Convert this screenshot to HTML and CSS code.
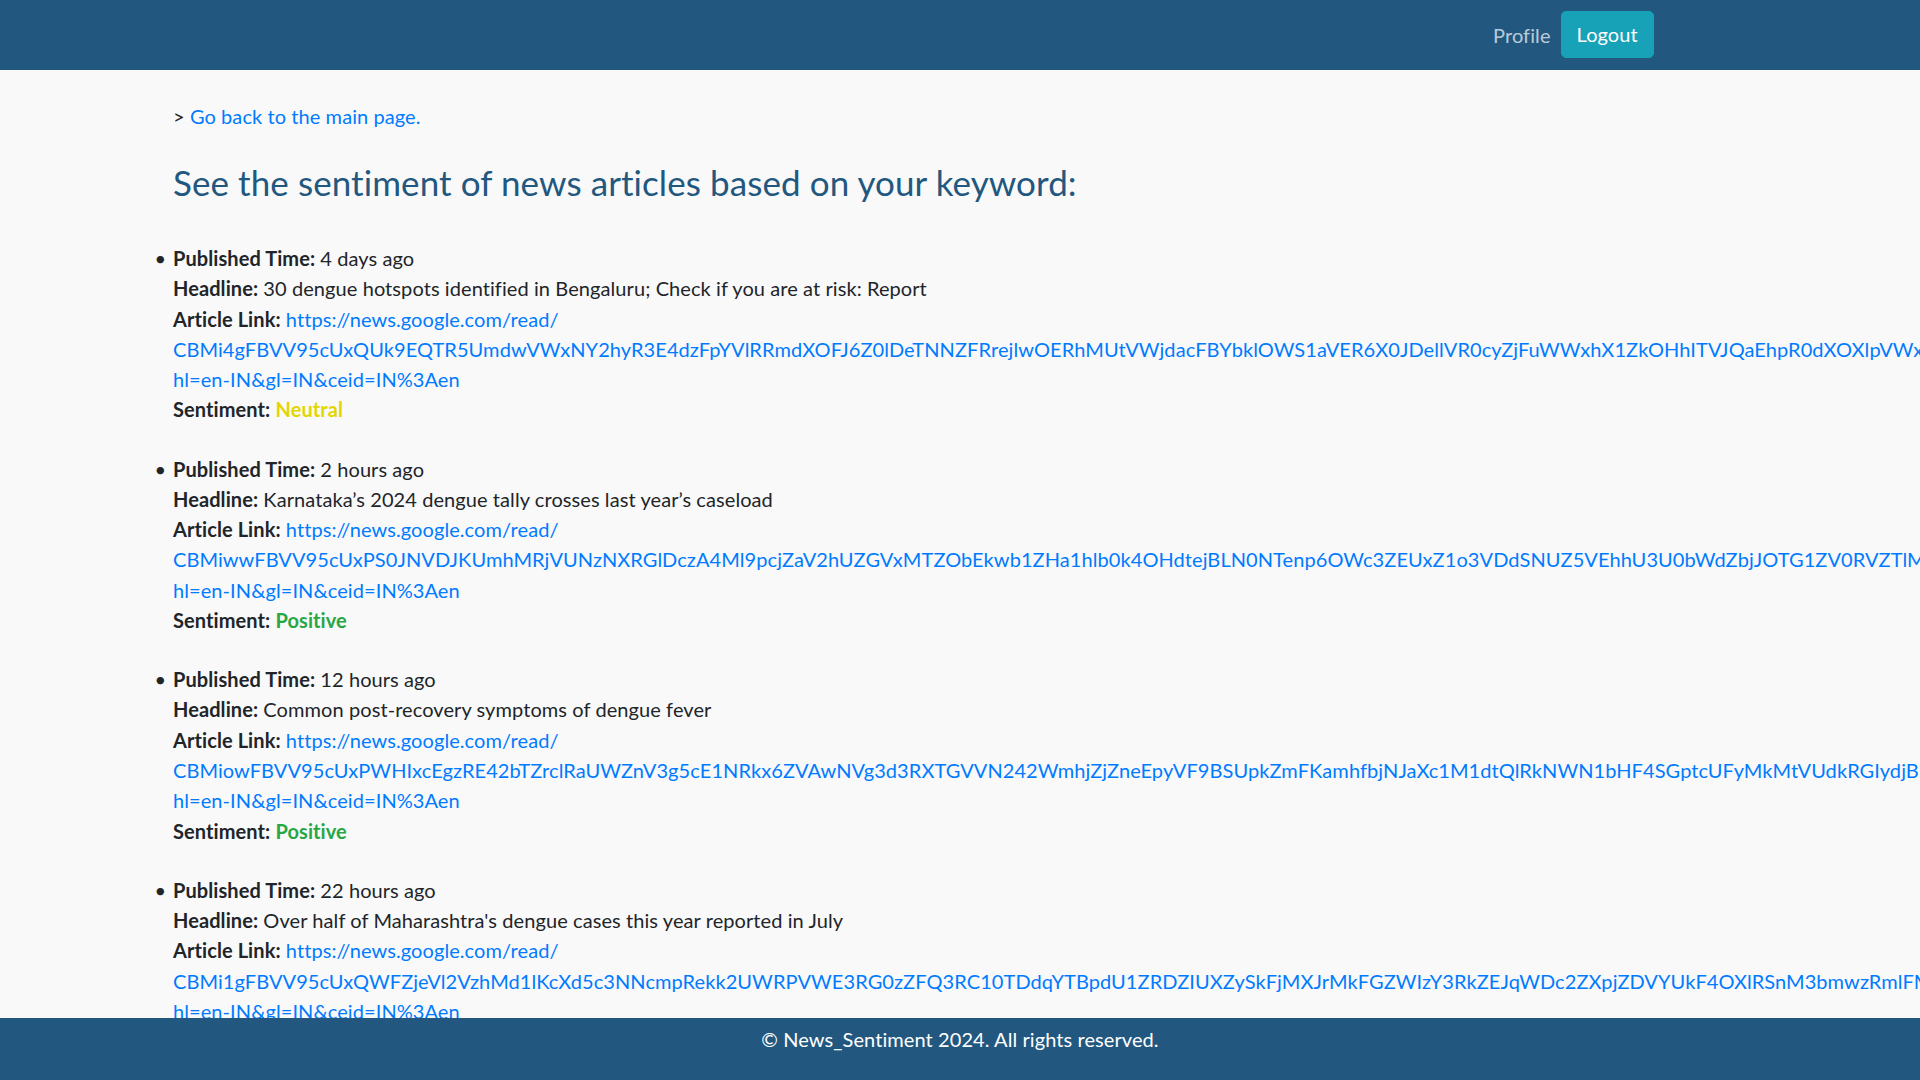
FILE: index.html
```html
<!DOCTYPE html>
<html lang="en">
<head>
<meta charset="utf-8">
<title>News Sentiment</title>
<link rel="stylesheet" href="styles.css">
</head>
<body>
<nav class="navbar">
  <div class="navbar-inner">
    <a class="nav-link" href="#">Profile</a>
    <a class="btn-logout" href="#">Logout</a>
  </div>
</nav>

<main class="content">
  <p class="back">&gt; <a href="#">Go back to the main page.</a></p>
  <h3 class="title">See the sentiment of news articles based on your keyword:</h3>
  <ul class="articles">
    <li>
      <div><b>Published Time:</b> 4 days ago</div>
      <div><b>Headline:</b> 30 dengue hotspots identified in Bengaluru; Check if you are at risk: Report</div>
      <div><b>Article Link:</b> <a href="#">https://news.google.com/read/<wbr>CBMi4gFBVV95cUxQUk9EQTR5UmdwVWxNY2hyR3E4dzFpYVlRRmdXOFJ6Z0lDeTNNZFRrejlwOERhMUtVWjdacFBYbklOWS1aVER6X0JDellVR0cyZjFuWWxhX1ZkOHhITVJQaEhpR0dXOXlpVWx1Q3poOFJtU2ZhR3d0Zk5IR0FqbU1qeXZZOXVqR0dIbWVZVzBlUQ?<wbr>hl=en-IN&amp;gl=IN&amp;ceid=IN%3Aen</a></div>
      <div><b>Sentiment:</b> <span class="neutral">Neutral</span></div>
    </li>
    <li>
      <div><b>Published Time:</b> 2 hours ago</div>
      <div><b>Headline:</b> Karnataka’s 2024 dengue tally crosses last year’s caseload</div>
      <div><b>Article Link:</b> <a href="#">https://news.google.com/read/<wbr>CBMiwwFBVV95cUxPS0JNVDJKUmhMRjVUNzNXRGlDczA4Ml9pcjZaV2hUZGVxMTZObEkwb1ZHa1hlb0k4OHdtejBLN0NTenp6OWc3ZEUxZ1o3VDdSNUZ5VEhhU3U0bWdZbjJOTG1ZV0RVZTlMeDJKNXJkR3hZc2JmWg?<wbr>hl=en-IN&amp;gl=IN&amp;ceid=IN%3Aen</a></div>
      <div><b>Sentiment:</b> <span class="positive">Positive</span></div>
    </li>
    <li>
      <div><b>Published Time:</b> 12 hours ago</div>
      <div><b>Headline:</b> Common post-recovery symptoms of dengue fever</div>
      <div><b>Article Link:</b> <a href="#">https://news.google.com/read/<wbr>CBMiowFBVV95cUxPWHIxcEgzRE42bTZrclRaUWZnV3g5cE1NRkx6ZVAwNVg3d3RXTGVVN242WmhjZjZneEpyVF9BSUpkZmFKamhfbjNJaXc1M1dtQlRkNWN1bHF4SGptcUFyMkMtVUdkRGIydjBlaFRPcnZqUGhOaw?<wbr>hl=en-IN&amp;gl=IN&amp;ceid=IN%3Aen</a></div>
      <div><b>Sentiment:</b> <span class="positive">Positive</span></div>
    </li>
    <li>
      <div><b>Published Time:</b> 22 hours ago</div>
      <div><b>Headline:</b> Over half of Maharashtra's dengue cases this year reported in July</div>
      <div><b>Article Link:</b> <a href="#">https://news.google.com/read/<wbr>CBMi1gFBVV95cUxQWFZjeVl2VzhMd1lKcXd5c3NNcmpRekk2UWRPVWE3RG0zZFQ3RC10TDdqYTBpdU1ZRDZIUXZySkFjMXJrMkFGZWIzY3RkZEJqWDc2ZXpjZDVYUkF4OXlRSnM3bmwzRmlFMzk3QU00ZTdiaHk?<wbr>hl=en-IN&amp;gl=IN&amp;ceid=IN%3Aen</a></div>
      <div><b>Sentiment:</b> <span class="neutral">Neutral</span></div>
    </li>
  </ul>
</main>

<footer class="footer">
  <p>© News_Sentiment 2024. All rights reserved.</p>
</footer>
</body>
</html>
```
FILE: styles.css
```css
html {
  scrollbar-width: none;
}
html::-webkit-scrollbar {
  display: none;
}
body {
  margin: 0;
  background: #f9f9f9;
  color: #212529;
  font-family: Lato, "Open Sans", sans-serif;
  font-size: 20px;
  line-height: 30px;
  letter-spacing: 0.08px;
}
a {
  color: #007bff;
  text-decoration: none;
}
.navbar {
  background: #22587f;
  height: 70px;
  display: flex;
  align-items: center;
}
.navbar-inner {
  width: 1425px;
  margin: 0 auto;
  padding: 0 18.75px;
  box-sizing: border-box;
  display: flex;
  justify-content: flex-end;
  align-items: center;
}
.nav-link {
  color: rgba(255, 255, 255, 0.7);
  padding: 10px;
}
.btn-logout {
  display: inline-block;
  background: #17a2b8;
  color: #fff;
  padding: 7.5px 15px;
  border-radius: 5px;
  border: 1px solid #17a2b8;
  margin-top: -2px;
}
.content {
  padding: 31px 0 100px 173px;
}
.back {
  margin: 0 0 30px;
}
.title {
  margin: 0 0 40px;
  font-size: 35px;
  line-height: 42px;
  font-weight: 400;
  color: #22587f;
}
.articles {
  margin: 0;
  padding: 0;
  line-height: 30.3px;
}
.articles li {
  margin-bottom: 28.8px;
}
.articles li::marker {
  content: "•\2006\2006";
}
.articles b {
  font-weight: 700;
}
.neutral {
  color: #e3d600;
  font-weight: 700;
}
.positive {
  color: #28a745;
  font-weight: 700;
}
.footer {
  position: fixed;
  left: 0;
  right: 0;
  bottom: 0;
  background: #22587f;
  color: #fff;
  text-align: center;
  padding: 6px 0 0;
  height: 62.5px;
  box-sizing: border-box;
}
.footer p {
  margin: 0;
}
```
